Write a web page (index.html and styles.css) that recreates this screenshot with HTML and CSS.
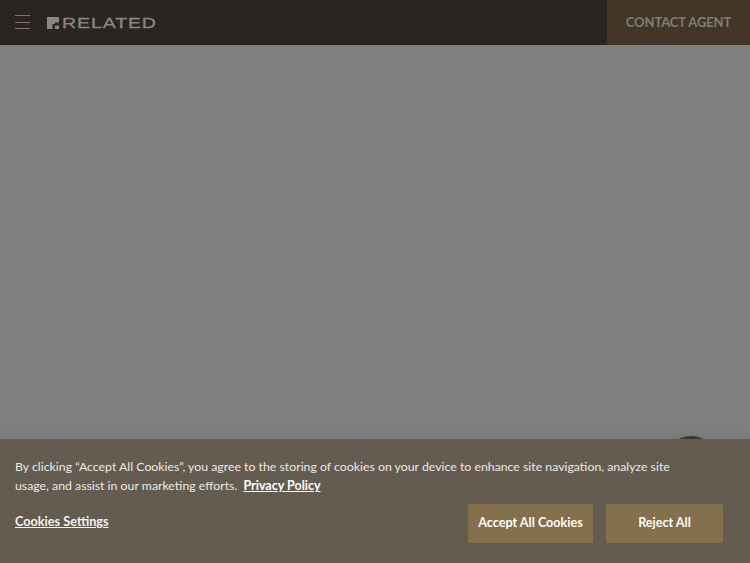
FILE: index.html
```html
<!DOCTYPE html>
<html lang="en">
<head>
<meta charset="utf-8">
<title>Related</title>
<link rel="stylesheet" href="styles.css">
</head>
<body>
<div class="page">
  <header class="topbar">
    <div class="brand">
      <button class="menu" aria-label="Menu"><span></span><span></span><span></span></button>
      <div class="logo">
        <svg class="logo-mark" width="12" height="12" viewBox="0 0 12 12"><path d="M0 0H12V5.500H8V7H5.500V12H0Z" fill="#8a8885"/><path d="M8 8.500H12V12H8Z" fill="#8a8885"/></svg>
        <span class="logo-text">RELATED</span>
      </div>
    </div>
    <a class="contact">CONTACT AGENT</a>
  </header>
  <main class="hero"></main>
  <div class="fab"></div>
  <section class="cookie">
    <p class="cookie-text">By clicking “Accept All Cookies”, you agree to the storing of cookies on your device to enhance site navigation, analyze site usage, and assist in our marketing efforts. <a class="policy">Privacy Policy</a></p>
    <div class="cookie-actions">
      <a class="settings">Cookies Settings</a>
      <div class="buttons">
        <button class="btn btn-accept">Accept All Cookies</button>
        <button class="btn btn-reject">Reject All</button>
      </div>
    </div>
  </section>
</div>
</body>
</html>
```
FILE: styles.css
```css
* { box-sizing: border-box; }
html, body { margin: 0; padding: 0; }
body { font-family: "Lato", "Liberation Sans", sans-serif; background: #808080; }
.page { position: relative; width: 750px; height: 563px; overflow: hidden; display: flex; flex-direction: column; }
.topbar { height: 45px; flex: none; display: flex; justify-content: space-between; align-items: stretch; background: #2a2522; }
.brand { display: flex; align-items: center; padding-left: 15px; gap: 17px; }
.menu { width: 15px; height: 14px; margin-bottom: 1px; padding: 0; border: 0; background: none; display: flex; flex-direction: column; justify-content: space-between; }
.menu span { display: block; height: 1px; background: #7c766c; }
.logo { display: flex; align-items: center; gap: 3px; }
.logo-mark { display: block; }
.logo-text { display: inline-block; width: 94px; font-family: "Liberation Sans", sans-serif; font-size: 15px; line-height: 15px; color: #8a8883; letter-spacing: 0.7px; -webkit-text-stroke: 0.3px #8a8883; transform: scaleX(1.3); transform-origin: left center; white-space: nowrap; }
.contact { width: 143px; padding-bottom: 2px; display: flex; align-items: center; justify-content: center; background: #433626; color: #807d7a; font-size: 13px; font-weight: 700; letter-spacing: -0.1px; }
.hero { flex: 1; background: #808080; }
.fab { position: absolute; left: 664px; top: 436px; width: 54px; height: 54px; border-radius: 50%; background: #43382a; }
.cookie { position: absolute; left: 0; right: 0; bottom: 0; height: 124px; padding: 18px 27px 20px 15px; background: #645c50; box-shadow: 0 0 18px rgba(0, 0, 0, 0.1); color: #ece9e5; font-size: 12.3px; display: flex; flex-direction: column; justify-content: space-between; }
.cookie-text { margin: 0; width: 670px; line-height: 19px; }
.policy { margin-left: 3px; font-size: 12.5px; font-weight: 700; color: #fff; text-decoration: underline; }
.cookie-actions { display: flex; justify-content: space-between; align-items: flex-start; }
.settings { margin-top: 9px; font-size: 12.7px; font-weight: 700; color: #f4f3f1; text-decoration: underline; }
.buttons { display: flex; gap: 13px; }
.btn { height: 39px; padding: 0 0 3px; border: 0; border-radius: 2px; background: #85704d; color: #fff; font: 700 12.6px "Lato", "Liberation Sans", sans-serif; }
.btn-accept { width: 125px; }
.btn-reject { width: 117px; }
```
